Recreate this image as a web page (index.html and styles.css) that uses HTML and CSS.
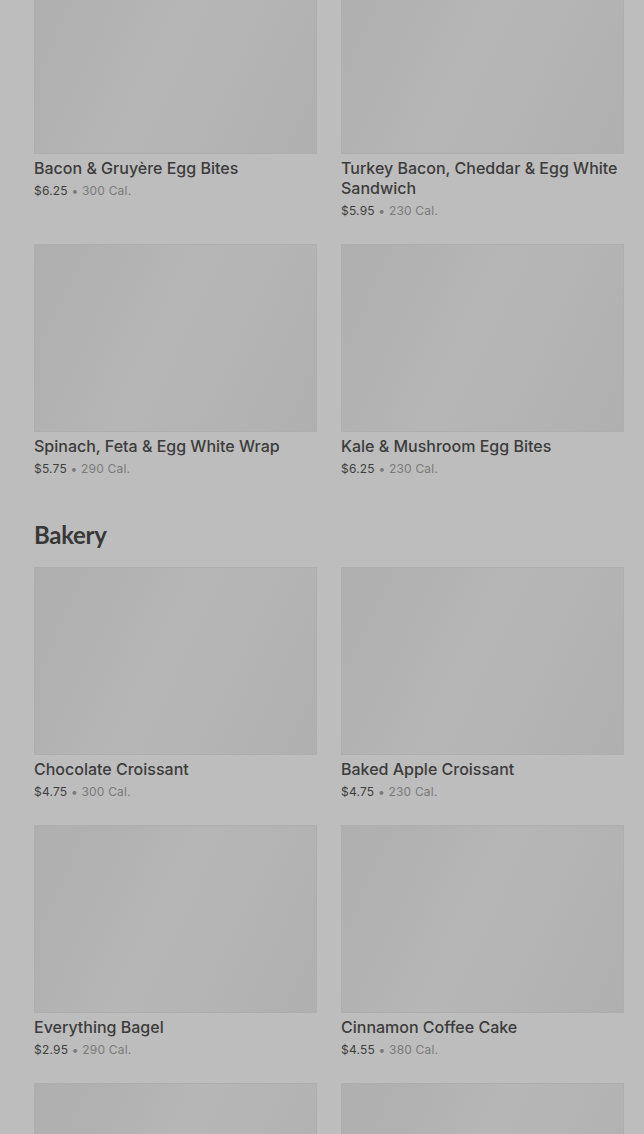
FILE: index.html
```
<!DOCTYPE html>
<html lang="en">
<head>
    <meta charset="UTF-8">
    <meta name="viewport" content="width=device-width, initial-scale=1.0">
    <title>Menu</title>
    <link rel="stylesheet" href="styles.css">
</head>
<body>
    <div class="menu">
        <section class="menu-section">
            <div class="product-grid">
                <div class="product">
                    <div class="product-image"></div>
                    <div class="product-name">Bacon &amp; Gruyère Egg Bites</div>
                    <div class="product-meta"><span class="price">$6.25</span> • 300 Cal.</div>
                </div>
                <div class="product">
                    <div class="product-image"></div>
                    <div class="product-name">Turkey Bacon, Cheddar &amp; Egg White Sandwich</div>
                    <div class="product-meta"><span class="price">$5.95</span> • 230 Cal.</div>
                </div>
                <div class="product">
                    <div class="product-image"></div>
                    <div class="product-name">Spinach, Feta &amp; Egg White Wrap</div>
                    <div class="product-meta"><span class="price">$5.75</span> • 290 Cal.</div>
                </div>
                <div class="product">
                    <div class="product-image"></div>
                    <div class="product-name">Kale &amp; Mushroom Egg Bites</div>
                    <div class="product-meta"><span class="price">$6.25</span> • 230 Cal.</div>
                </div>
            </div>
        </section>

        <section class="menu-section">
            <h2 class="section-title">Bakery</h2>
            <div class="product-grid">
                <div class="product">
                    <div class="product-image"></div>
                    <div class="product-name">Chocolate Croissant</div>
                    <div class="product-meta"><span class="price">$4.75</span> • 300 Cal.</div>
                </div>
                <div class="product">
                    <div class="product-image"></div>
                    <div class="product-name">Baked Apple Croissant</div>
                    <div class="product-meta"><span class="price">$4.75</span> • 230 Cal.</div>
                </div>
                <div class="product">
                    <div class="product-image"></div>
                    <div class="product-name">Everything Bagel</div>
                    <div class="product-meta"><span class="price">$2.95</span> • 290 Cal.</div>
                </div>
                <div class="product">
                    <div class="product-image"></div>
                    <div class="product-name">Cinnamon Coffee Cake</div>
                    <div class="product-meta"><span class="price">$4.55</span> • 380 Cal.</div>
                </div>
                <div class="product">
                    <div class="product-image"></div>
                </div>
                <div class="product">
                    <div class="product-image"></div>
                </div>
            </div>
        </section>
    </div>
</body>
</html>
```

FILE: styles.css
```
* {
    margin: 0;
    padding: 0;
    box-sizing: border-box;
}

html, body {
    height: 100%;
    overflow: hidden;
}

body {
    font-family: Inter, Roboto, "Liberation Sans", sans-serif;
    background: #bdbdbd;
    color: #3d3d3d;
}

.menu {
    padding: 0 20px 0 34px;
    margin-top: -34px;
}

.menu-section + .menu-section {
    margin-top: 41px;
}

.section-title {
    font-family: Lato, "Liberation Sans", sans-serif;
    font-size: 24px;
    font-weight: 700;
    line-height: 32px;
    color: #383838;
    margin-bottom: 16px;
    letter-spacing: -0.3px;
}

.product-grid {
    display: grid;
    grid-template-columns: 1fr 1fr;
    column-gap: 24px;
    row-gap: 24px;
}

.product-image {
    height: 188px;
    border: 1px solid #aeaeae;
    background: linear-gradient(115deg, #afafaf 0%, #b1b1b1 20%, #b6b6b6 45%, #b4b4b4 70%, #afafaf 100%);
}

.product-name {
    margin-top: 4px;
    font-size: 16px;
    font-weight: 500;
    line-height: 20px;
    color: #3c3c3c;
}

.product-meta {
    margin-top: 4px;
    font-size: 12px;
    line-height: 18px;
    letter-spacing: 0.2px;
    color: #7a7a7a;
}

.price {
    color: #3f3f3f;
}
```
